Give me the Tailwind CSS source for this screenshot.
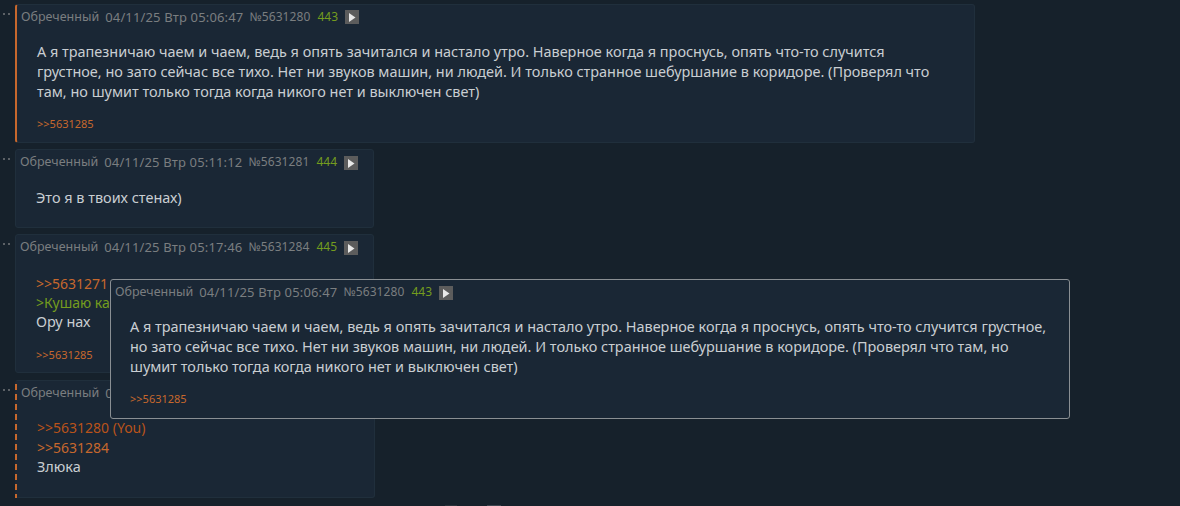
<!DOCTYPE html>
<html lang="ru">
<head>
  <meta charset="UTF-8">
  <title>Тред</title>
  <script src="https://cdn.jsdelivr.net/npm/@tailwindcss/browser@4"></script>
</head>
<body class="bg-[#16212b] font-['Noto_Sans',sans-serif] text-[14px] leading-[20px] text-[#c9ced2] overflow-hidden">
<div class="relative h-[506px] overflow-hidden pl-[15px] pt-[4px]">

  <!-- highlighted post -->
  <div class="relative w-[960px] h-[139px] rounded-[3px] border border-[#202f3c] border-l-2 border-l-[#c7682d] bg-[#1a2735] pl-[4px]">
    <div class="absolute left-[-14px] top-[8px] flex gap-[3px]"><span class="w-[2px] h-[2px] bg-[#5c6166]"></span><span class="w-[2px] h-[2px] bg-[#5c6166]"></span></div>
    <div class="flex items-center h-[24px] text-[#7a7e80] whitespace-nowrap">
      <span class="text-[12.5px]">Обреченный</span><span class="ml-[6px] text-[13px] tracking-[0.15px]">04/11/25 Втр 05:06:47</span><span class="ml-[6px] text-[12px] tracking-[0.1px]">№5631280</span><span class="ml-[7px] text-[12px] text-[#749c1e]">443</span>
      <span class="ml-[7px] w-[14px] h-[14px] bg-[#5c5c5c] flex items-center justify-center"><svg width="8" height="9" viewBox="0 0 8 9"><path d="M1 0l6.5 4.5L1 9z" fill="#e8e8e8"/></svg></span>
    </div>
    <div class="pl-[16px] pt-[13px] whitespace-nowrap text-[14.45px]">А я трапезничаю чаем и чаем, ведь я опять зачитался и настало утро. Наверное когда я проснусь, опять что-то случится<br>грустное, но зато сейчас все тихо. Нет ни звуков машин, ни людей. И только странное шебуршание в коридоре. (Проверял что<br>там, но шумит только тогда когда никого нет и выключен свет)</div>
    <div class="pl-[16px] pt-[12px] text-[11px] text-[#c7682d]">&gt;&gt;5631285</div>
  </div>

  <div class="relative mt-[6px] w-[359px] h-[79px] rounded-[3px] border border-[#202f3c] bg-[#1a2735] pl-[4px]">
    <div class="absolute left-[-13px] top-[8px] flex gap-[3px]"><span class="w-[2px] h-[2px] bg-[#5c6166]"></span><span class="w-[2px] h-[2px] bg-[#5c6166]"></span></div>
    <div class="flex items-center h-[24px] text-[#7a7e80] whitespace-nowrap">
      <span class="text-[12.5px]">Обреченный</span><span class="ml-[6px] text-[13px] tracking-[0.15px]">04/11/25 Втр 05:11:12</span><span class="ml-[6px] text-[12px] tracking-[0.1px]">№5631281</span><span class="ml-[7px] text-[12px] text-[#749c1e]">444</span>
      <span class="ml-[7px] mt-[2px] w-[14px] h-[14px] bg-[#5c5c5c] flex items-center justify-center"><svg width="8" height="9" viewBox="0 0 8 9"><path d="M1 0l6.5 4.5L1 9z" fill="#e8e8e8"/></svg></span>
    </div>
    <div class="pl-[16px] pt-[14px] text-[14.45px]">Это я в твоих стенах)</div>
  </div>

  <div class="relative mt-[6px] w-[359px] h-[139px] rounded-[3px] border border-[#202f3c] bg-[#1a2735] pl-[4px]">
    <div class="absolute left-[-13px] top-[8px] flex gap-[3px]"><span class="w-[2px] h-[2px] bg-[#5c6166]"></span><span class="w-[2px] h-[2px] bg-[#5c6166]"></span></div>
    <div class="flex items-center h-[24px] text-[#7a7e80] whitespace-nowrap">
      <span class="text-[12.5px]">Обреченный</span><span class="ml-[6px] text-[13px] tracking-[0.15px]">04/11/25 Втр 05:17:46</span><span class="ml-[6px] text-[12px] tracking-[0.1px]">№5631284</span><span class="ml-[7px] text-[12px] text-[#749c1e]">445</span>
      <span class="ml-[7px] mt-[2px] w-[14px] h-[14px] bg-[#5c5c5c] flex items-center justify-center"><svg width="8" height="9" viewBox="0 0 8 9"><path d="M1 0l6.5 4.5L1 9z" fill="#e8e8e8"/></svg></span>
    </div>
    <div class="pl-[16px] pt-[15px]">
      <div class="text-[#c7682d]">&gt;&gt;5631271</div>
      <div class="-mt-[1px] text-[#749c1e]">&gt;Кушаю как</div>
      <div class="-mt-[1px] text-[14.45px]">Ору нах</div>
    </div>
    <div class="pl-[16px] pt-[13px] text-[11px] text-[#c7682d]">&gt;&gt;5631285</div>
  </div>

  <div class="relative mt-[7px] w-[360px] h-[118px] rounded-[3px] border border-[#202f3c] border-l-2 border-l-transparent bg-[#1a2735] pl-[4px]">
    <div class="absolute left-[-2px] top-[-1px] bottom-[-1px] w-[2px] bg-[repeating-linear-gradient(to_bottom,transparent_0,transparent_4px,#c7682d_4px,#c7682d_10px)]"></div>
    <div class="absolute left-[-14px] top-[8px] flex gap-[3px]"><span class="w-[2px] h-[2px] bg-[#5c6166]"></span><span class="w-[2px] h-[2px] bg-[#5c6166]"></span></div>
    <div class="flex items-center h-[24px] text-[#7a7e80] whitespace-nowrap">
      <span class="text-[12.5px]">Обреченный</span><span class="ml-[6px] text-[13px]">0</span>
    </div>
    <div class="pl-[16px] pt-[13px]">
      <div class="text-[#b9531a]">&gt;&gt;5631280 (You)</div>
      <div class="text-[#c7682d]">&gt;&gt;5631284</div>
      <div class="-mt-[1px] text-[14.45px]">Злюка</div>
    </div>
  </div>

  <!-- hover preview -->
  <div class="absolute left-[110px] top-[279px] w-[960px] h-[140px] rounded-[3px] border border-[#8a8f93] bg-[#1a2735] pl-[4px]">
    <div class="flex items-center h-[24px] text-[#7a7e80] whitespace-nowrap">
      <span class="text-[12.5px]">Обреченный</span><span class="ml-[6px] text-[13px] tracking-[0.15px]">04/11/25 Втр 05:06:47</span><span class="ml-[6px] text-[12px] tracking-[0.1px]">№5631280</span><span class="ml-[7px] text-[12px] text-[#749c1e]">443</span>
      <span class="ml-[7px] mt-[2px] w-[14px] h-[14px] bg-[#5c5c5c] flex items-center justify-center"><svg width="8" height="9" viewBox="0 0 8 9"><path d="M1 0l6.5 4.5L1 9z" fill="#e8e8e8"/></svg></span>
    </div>
    <div class="pl-[15px] pt-[13px] whitespace-nowrap text-[14.45px]">А я трапезничаю чаем и чаем, ведь я опять зачитался и настало утро. Наверное когда я проснусь, опять что-то случится грустное,<br>но зато сейчас все тихо. Нет ни звуков машин, ни людей. И только странное шебуршание в коридоре. (Проверял что там, но<br>шумит только тогда когда никого нет и выключен свет)</div>
    <div class="pl-[15px] pt-[12px] text-[11px] text-[#c7682d]">&gt;&gt;5631285</div>
  </div>

  <!-- bottom nav buttons, clipped by the window edge -->
  <div class="absolute left-[445px] bottom-0 w-[12px] h-[1px] bg-[#2a333b]"></div>
  <div class="absolute left-[487px] bottom-0 w-[14px] h-[1px] bg-[#3d4650]"></div>
</div>
</body>
</html>
